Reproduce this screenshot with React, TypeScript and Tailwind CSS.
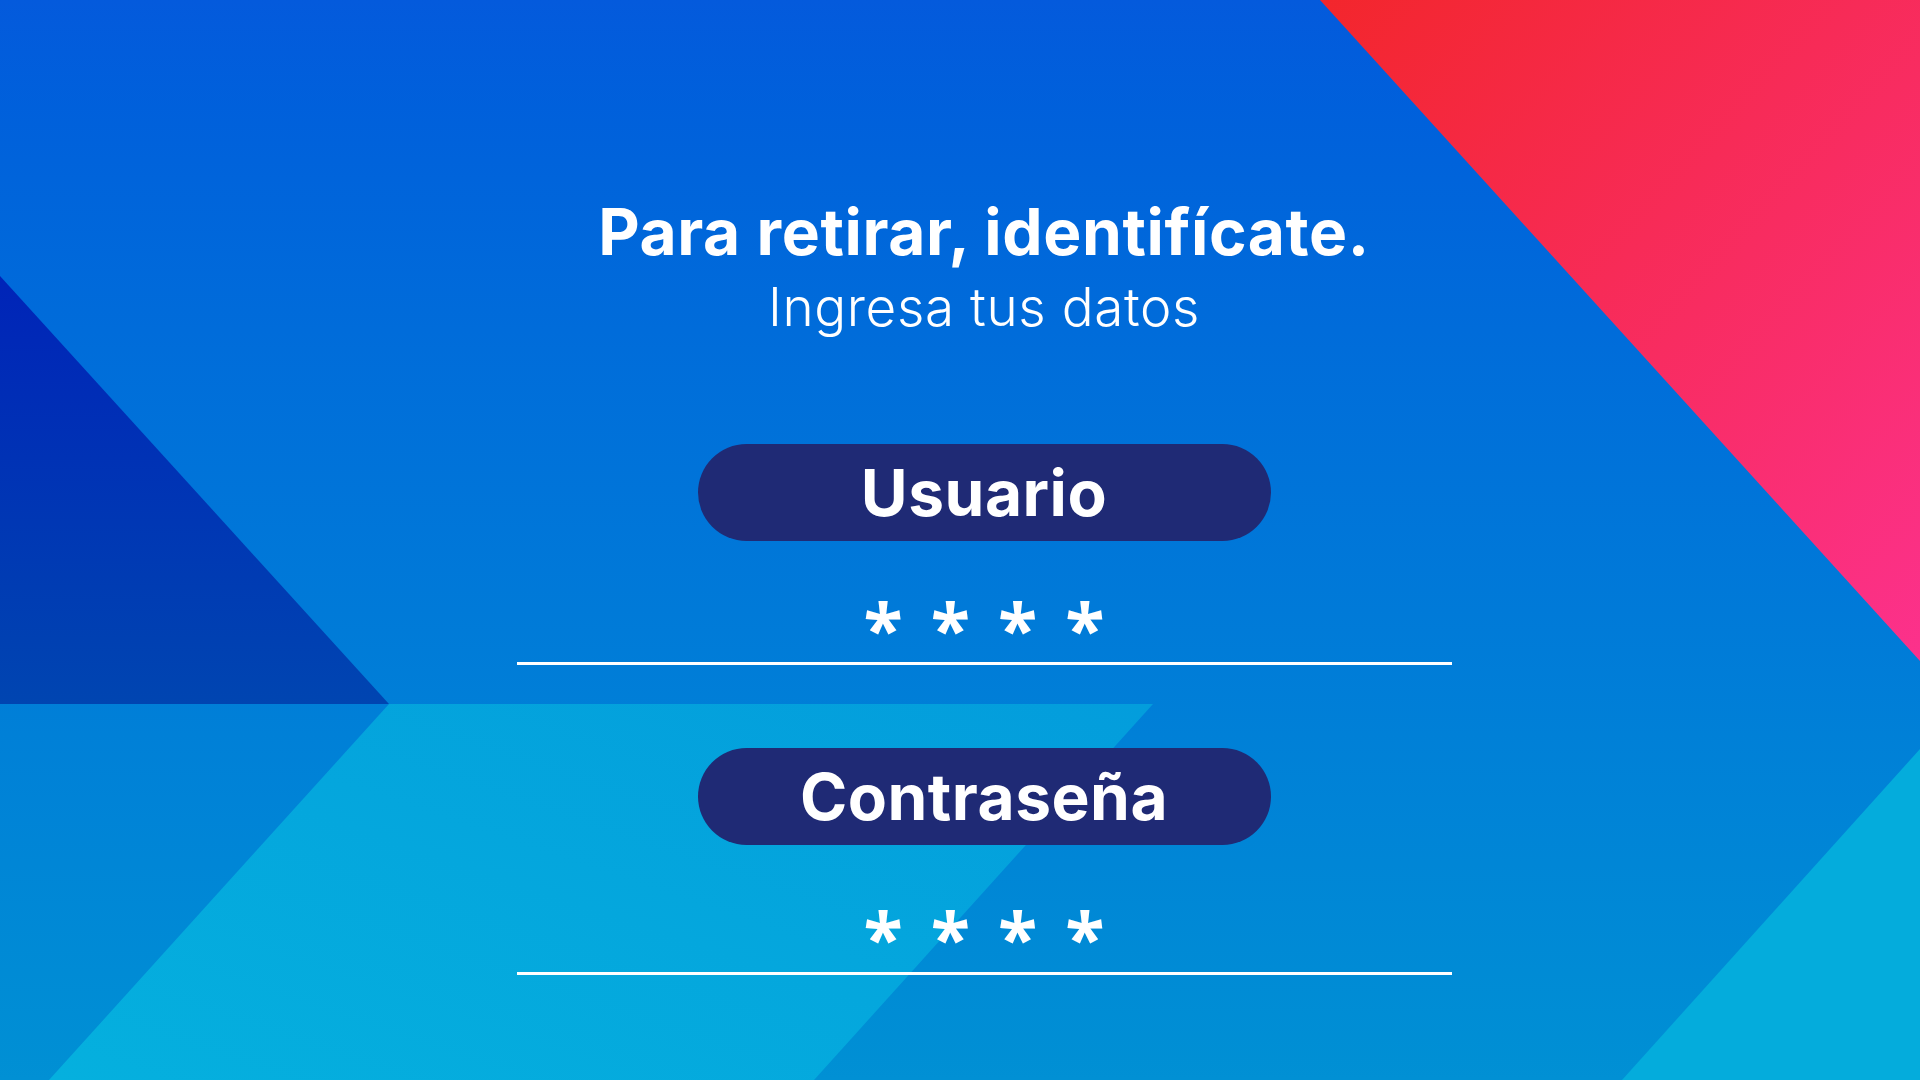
const Stars = () => (
  <div className="flex h-[40px] items-start justify-center gap-[28px] overflow-visible">
    {[0, 1, 2, 3].map((i) => (
      <span
        key={i}
        className="block h-[40px] text-[72px] leading-[1] font-bold text-white"
        style={{ fontFamily: '"Open Sans", sans-serif' }}
      >
        *
      </span>
    ))}
  </div>
)

const Pill = ({ label }: { label: string }) => (
  <div className="flex h-[97px] w-[573px] items-center justify-center rounded-full bg-[#1f2a75]">
    <span className="text-[64px] leading-none font-bold tracking-[0.5px] text-white">{label}</span>
  </div>
)

const Background = () => (
  <svg className="absolute inset-0" width="1920" height="1080" viewBox="0 0 1920 1080">
    <defs>
      <linearGradient id="red" x1="0" y1="0" x2="1" y2="1">
        <stop offset="0" stopColor="#f3262c" />
        <stop offset="1" stopColor="#fc318c" />
      </linearGradient>
      <linearGradient id="dark" x1="0" y1="0" x2="0" y2="1">
        <stop offset="0" stopColor="#0024b8" />
        <stop offset="1" stopColor="#0045b1" />
      </linearGradient>
      <linearGradient id="cyan" x1="1" y1="0" x2="0" y2="1">
        <stop offset="0" stopColor="#039ddc" />
        <stop offset="1" stopColor="#05b0de" />
      </linearGradient>
    </defs>
    <polygon points="1320,0 1920,0 1920,661" fill="url(#red)" />
    <polygon points="0,276 389,704 0,704" fill="url(#dark)" />
    <polygon points="389,704 1153,704 814,1080 49,1080" fill="url(#cyan)" />
    <polygon points="1920,749 1920,1080 1622,1080" fill="#04acdc" />
  </svg>
)

export default function App() {
  return (
    <div
      className="relative h-[1080px] w-[1920px] overflow-hidden bg-gradient-to-b from-[#045adc] to-[#0190d4]"
      style={{ fontFamily: 'Inter, "Noto Sans", sans-serif' }}
    >
      <Background />
      <div className="relative flex flex-col items-center pt-[199px] pl-[48px]">
        <h1 className="text-[64px] leading-[66px] font-bold tracking-[0.6px] text-white">
          Para retirar, identifícate.
        </h1>
        <p className="mt-[14px] text-[53px] leading-[57px] font-light tracking-[0.6px] text-white">
          Ingresa tus datos
        </p>

        <div className="mt-[108px]">
          <Pill label="Usuario" />
        </div>
        <div className="mt-[51px]">
          <Stars />
        </div>
        <div className="mt-[30px] h-[3px] w-[935px] bg-white" />

        <div className="mt-[83px]">
          <Pill label="Contraseña" />
        </div>
        <div className="mt-[56px]">
          <Stars />
        </div>
        <div className="mt-[31px] h-[3px] w-[935px] bg-white" />
      </div>
    </div>
  )
}
